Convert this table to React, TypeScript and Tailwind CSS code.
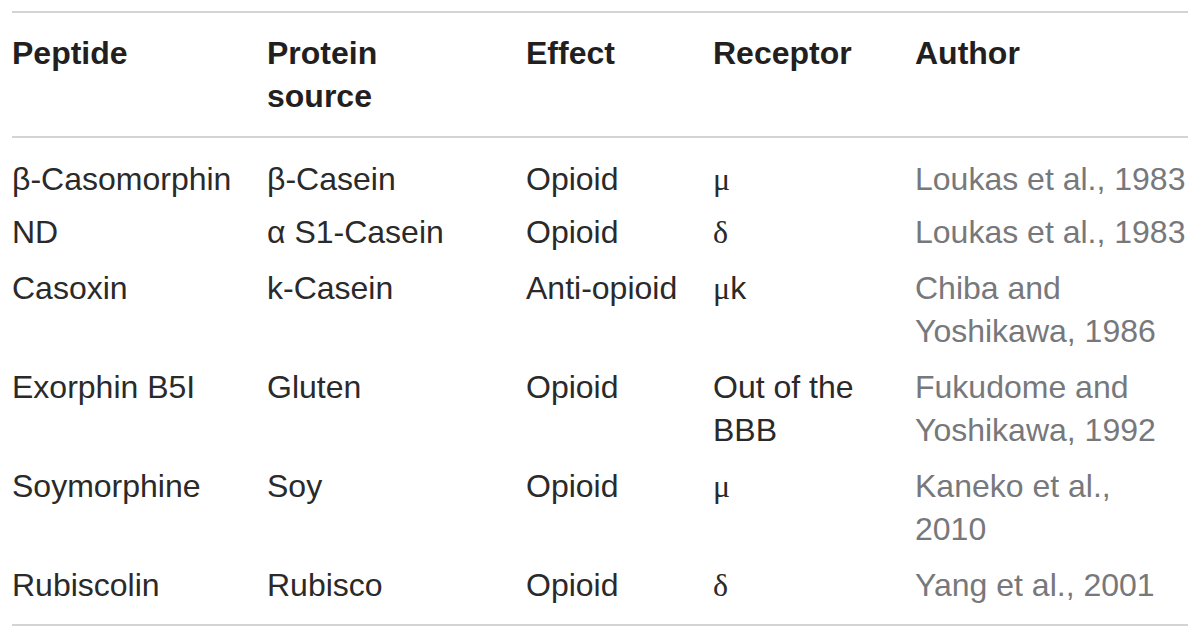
const rows = [
  { peptide: "β-Casomorphin", source: "β-Casein", effect: "Opioid", receptor: "μ", author: ["Loukas et al., 1983"] },
  { peptide: "ND", source: "α S1-Casein", effect: "Opioid", receptor: "δ", author: ["Loukas et al., 1983"] },
  { peptide: "Casoxin", source: "k-Casein", effect: "Anti-opioid", receptor: "μk", author: ["Chiba and", "Yoshikawa, 1986"] },
  { peptide: "Exorphin B5I", source: "Gluten", effect: "Opioid", receptor: ["Out of the", "BBB"], author: ["Fukudome and", "Yoshikawa, 1992"] },
  { peptide: "Soymorphine", source: "Soy", effect: "Opioid", receptor: "μ", author: ["Kaneko et al.,", "2010"] },
  { peptide: "Rubiscolin", source: "Rubisco", effect: "Opioid", receptor: "δ", author: ["Yang et al., 2001"] },
];

function Lines({ parts }: { parts: string[] }) {
  return (
    <>
      {parts.map((p, i) => (
        <span key={i} className="block whitespace-nowrap">{p}</span>
      ))}
    </>
  );
}

export default function App() {
  return (
    <div className="w-[1200px] h-[639px] bg-white pt-[11px] pl-[12px] font-['Liberation_Sans',Arial,sans-serif] text-[#231f20]">
      <table className="table-fixed border-collapse w-[1176px] text-[32px] leading-[43px]">
        <colgroup>
          <col className="w-[255px]" />
          <col className="w-[259px]" />
          <col className="w-[187px]" />
          <col className="w-[202px]" />
          <col className="w-[273px]" />
        </colgroup>
        <thead>
          <tr className="border-t-2 border-b-2 border-[#d4d4d4] font-bold text-left align-top">
            <th className="pt-[19px] pb-[18px] font-bold">Peptide</th>
            <th className="pt-[19px] pb-[18px] font-bold">
              Protein
              <br />
              source
            </th>
            <th className="pt-[19px] pb-[18px] font-bold">Effect</th>
            <th className="pt-[19px] pb-[18px] font-bold">Receptor</th>
            <th className="pt-[19px] pb-[18px] font-bold">Author</th>
          </tr>
        </thead>
        <tbody className="border-b-2 border-[#d4d4d4] text-[#2a2a2a]">
          {rows.map((r, i) => {
            const pad =
              i === 0 ? "pt-[20px] pb-[4px]" : i === rows.length - 1 ? "pt-[6px] pb-[17px]" : "pt-[6px] pb-[7px]";
            return (
              <tr key={i} className="align-top">
                <td className={`${pad} whitespace-nowrap`}>{r.peptide}</td>
                <td className={`${pad} whitespace-nowrap`}>{r.source}</td>
                <td className={`${pad} whitespace-nowrap`}>{r.effect}</td>
                <td className={pad}>
                  {Array.isArray(r.receptor) ? (
                    <Lines parts={r.receptor} />
                  ) : (
                    <span className="font-['Liberation_Serif',serif]">
                      {r.receptor === "μk" ? "μ" : r.receptor}
                      {r.receptor === "μk" && <span className="font-['Liberation_Sans',Arial,sans-serif]">k</span>}
                    </span>
                  )}
                </td>
                <td className={`${pad} text-[#77787b]`}>
                  <Lines parts={r.author} />
                </td>
              </tr>
            );
          })}
        </tbody>
      </table>
    </div>
  );
}
